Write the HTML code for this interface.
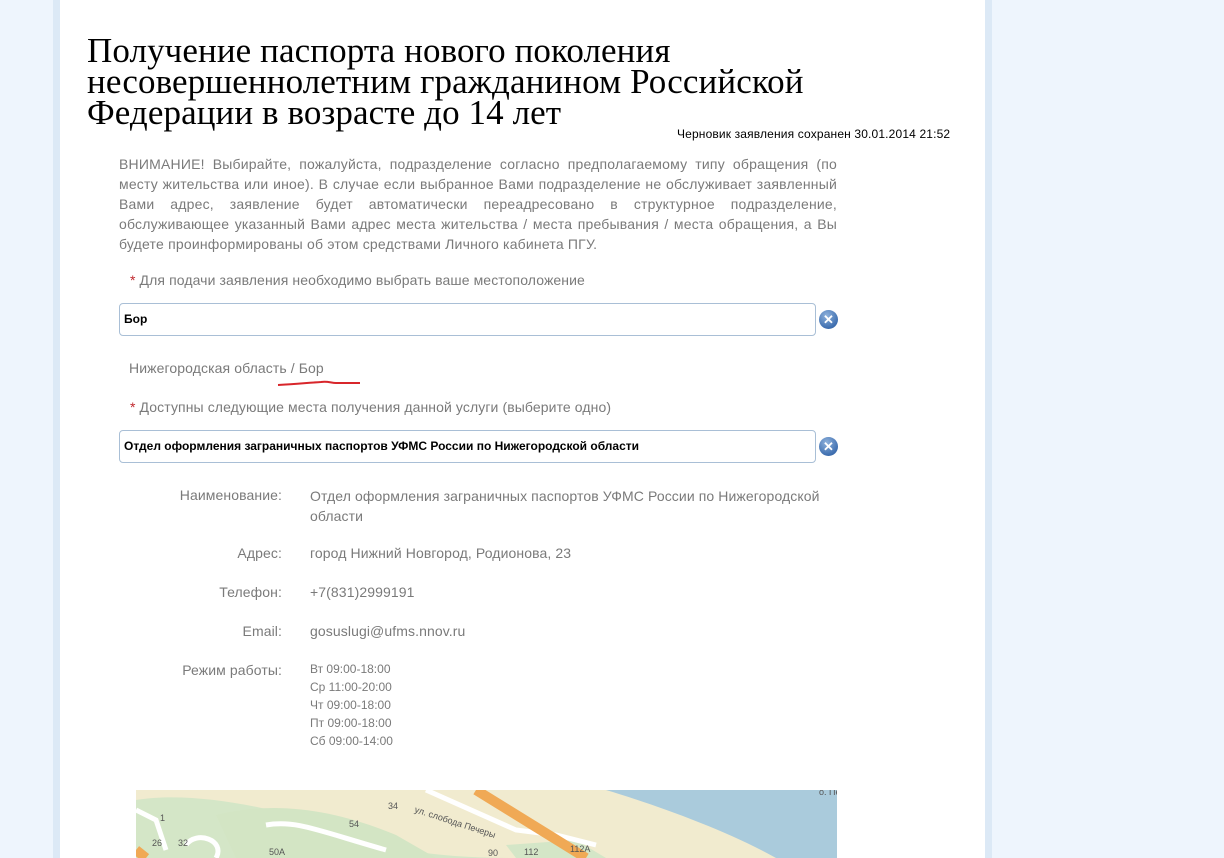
<!DOCTYPE html>
<html><head><meta charset="utf-8"><style>
body{margin:0;width:1224px;height:858px;background:#eef5fd;position:relative;overflow:hidden;font-family:"Liberation Sans",Arial,sans-serif}
.panel{position:absolute;left:53px;top:0;width:939px;height:858px;background:#dce9f6}
.inner{position:absolute;left:60px;top:0;width:925px;height:858px;background:#fff}
.abs{position:absolute}
h1{position:absolute;left:87px;top:35px;margin:0;font-family:"Liberation Serif",serif;font-weight:normal;font-size:35px;line-height:31px;color:#000;letter-spacing:0.1px}
.warn{left:119px;top:154px;width:718px;font-size:14px;line-height:20px;text-align:justify;color:#7a7a7a;letter-spacing:0.2px}
.lbl{font-size:14px;color:#7a7a7a;letter-spacing:0.1px}
.star{color:#c0272d}
.inp{position:absolute;left:119px;border:1px solid #a9bfd6;border-radius:4px;font-size:12px;font-weight:bold;line-height:31px;padding-left:4px;box-sizing:border-box;width:697px;height:33px}
.x{position:absolute;width:19px;height:19px;border-radius:50%;background:radial-gradient(circle at 40% 30%,#8fb2dc,#3f6fb0 70%,#2c5a97);color:#fff;font-size:13px;font-weight:bold;text-align:center;line-height:19px}
.dt{position:absolute;font-size:14px;color:#7a7a7a;letter-spacing:0.1px}
.k{width:160px;text-align:right;left:122px}
.v{left:310px}
.sm{font-size:12px;line-height:18px;letter-spacing:0}
</style></head><body>
<div class="panel"></div><div class="inner"></div>
<h1>Получение паспорта нового поколения<br>несовершеннолетним гражданином Российской<br>Федерации в возрасте до 14 лет</h1>
<div class="abs" style="left:677px;top:127px;font-size:12px;color:#000;letter-spacing:0.15px">Черновик заявления сохранен 30.01.2014 21:52</div>
<div class="abs warn">ВНИМАНИЕ! Выбирайте, пожалуйста, подразделение согласно предполагаемому типу обращения (по месту жительства или иное). В случае если выбранное Вами подразделение не обслуживает заявленный Вами адрес, заявление будет автоматически переадресовано в структурное подразделение, обслуживающее указанный Вами адрес места жительства / места пребывания / места обращения, а Вы будете проинформированы об этом средствами Личного кабинета ПГУ.</div>
<div class="abs lbl" style="left:130px;top:272px"><span class="star">*</span> Для подачи заявления необходимо выбрать ваше местоположение</div>
<div class="inp" style="top:303px">Бор</div>
<div class="x" style="left:819px;top:310px">✕</div>
<div class="abs lbl" style="left:129px;top:360px">Нижегородская область / Бор</div>
<svg class="abs" style="left:276px;top:379px" width="86" height="10"><path d="M2 6 C20 5 30 4 45 3 C52 2 55 4 60 4 L84 4" stroke="#d8262b" stroke-width="2" fill="none"/></svg>
<div class="abs lbl" style="left:130px;top:399px"><span class="star">*</span> Доступны следующие места получения данной услуги (выберите одно)</div>
<div class="inp" style="top:430px">Отдел оформления заграничных паспортов УФМС России по Нижегородской области</div>
<div class="x" style="left:819px;top:437px">✕</div>
<div class="dt k" style="top:487px">Наименование:</div>
<div class="dt v" style="top:486px;line-height:20px;width:530px">Отдел оформления заграничных паспортов УФМС России по Нижегородской области</div>
<div class="dt k" style="top:545px">Адрес:</div>
<div class="dt v" style="top:545px">город Нижний Новгород, Родионова, 23</div>
<div class="dt k" style="top:584px">Телефон:</div>
<div class="dt v" style="top:584px">+7(831)2999191</div>
<div class="dt k" style="top:623px">Email:</div>
<div class="dt v" style="top:623px">gosuslugi@ufms.nnov.ru</div>
<div class="dt k" style="top:662px">Режим работы:</div>
<div class="dt v sm" style="top:660px">Вт 09:00-18:00<br>Ср 11:00-20:00<br>Чт 09:00-18:00<br>Пт 09:00-18:00<br>Сб 09:00-14:00</div>
<svg class="abs" style="left:136px;top:790px" width="701" height="68">
<rect width="701" height="68" fill="#f1ebcf"/>
<path d="M0 10 C60 0 150 20 200 40 C250 60 300 68 380 68 L0 68Z" fill="#d4e6c7"/>
<path d="M80 25 C140 10 200 20 260 45 L300 68 L100 68Z" fill="#d3e5c4"/>
<path d="M470 0 L701 0 L701 68 L640 68 C590 40 520 15 470 0Z" fill="#aacbdc"/>
<path d="M370 55 L440 50 L470 68 L380 68Z" fill="#d4e6c7"/>
<path d="M290 0 L380 40 L420 45 L460 55" stroke="#fff" stroke-width="5" fill="none"/>
<path d="M0 20 L20 30 L30 60 M50 55 C60 40 90 50 80 68 M130 35 C160 30 180 40 250 60" stroke="#fff" stroke-width="5" fill="none"/>
<path d="M340 0 L450 68" stroke="#f0a955" stroke-width="10" fill="none"/>
<path d="M0 60 L10 68" stroke="#f0a955" stroke-width="10" fill="none"/>
<g font-family="Liberation Sans" font-size="9" fill="#555"><text x="252" y="19">34</text><text x="278" y="22" transform="rotate(18 278 22)">ул. слобода Печеры</text><text x="213" y="37">54</text><text x="24" y="31">1</text><text x="16" y="56">26</text><text x="42" y="56">32</text><text x="133" y="65">50A</text><text x="352" y="66">90</text><text x="388" y="65">112</text><text x="434" y="62">112A</text><text x="683" y="5">о. Пе</text></g>
</svg>
</body></html>
